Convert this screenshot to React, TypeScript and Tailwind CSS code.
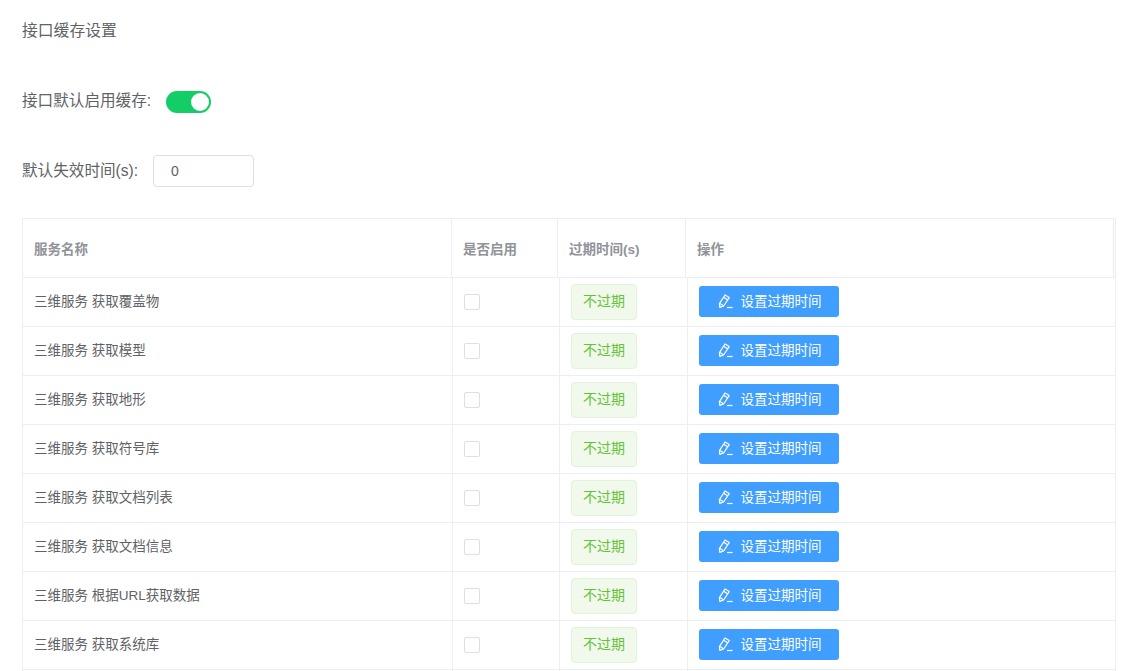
import type { ReactNode } from "react";

const services = [
  "三维服务 获取覆盖物",
  "三维服务 获取模型",
  "三维服务 获取地形",
  "三维服务 获取符号库",
  "三维服务 获取文档列表",
  "三维服务 获取文档信息",
  "三维服务 根据URL获取数据",
  "三维服务 获取系统库",
];

function PenIcon() {
  return (
    <svg width="16" height="16" viewBox="0 0 16 16" fill="none" stroke="currentColor" strokeWidth="1.2">
      <path d="M1.8 14.4 L1.4 10.6 L7 2 L11.2 4.6 L5.6 13 Z" strokeLinejoin="round" />
      <path d="M2 10.6 L5.4 12.8" />
      <path d="M5.6 4.2 L9.6 6.8" />
      <path d="M9 14.5 H14.6" />
    </svg>
  );
}

function Row({ name, check, tag, action }: { name?: string; check?: ReactNode; tag?: ReactNode; action?: ReactNode }) {
  return (
    <div className="flex h-[49px] border-b border-r border-[#ebeef5] text-[13.5px]">
      <div className="flex w-[430px] items-center border-r border-[#ebeef5] pl-[11px]">{name}</div>
      <div className="flex w-[107px] items-center border-r border-[#ebeef5] pb-[1px] pl-[11px]">{check}</div>
      <div className="flex w-[128px] items-center border-r border-[#ebeef5] pl-[11px]">{tag}</div>
      <div className="flex items-center pb-[2px] pl-[11px]">{action}</div>
    </div>
  );
}

export default function App() {
  return (
    <div className="h-[671px] overflow-hidden bg-white pl-[22px] pr-[19px] text-[#606266] font-['Liberation_Sans','Noto_Sans_CJK_SC',sans-serif]">
      <p className="pt-[20px] text-[15.8px] leading-[22px]">接口缓存设置</p>

      <div className="mt-[47px] flex h-[24px] items-center">
        <span className="w-[130px] text-[15.6px]">接口默认启用缓存:</span>
        <span className="ml-[14px] flex h-[22px] w-[45px] items-center justify-end self-end rounded-full bg-[#13ce66] pr-[2px]">
          <span className="h-[18px] w-[18px] rounded-full bg-white" />
        </span>
      </div>

      <div className="mt-[42px] flex items-center">
        <span className="w-[117px] text-[15.6px]">默认失效时间(s):</span>
        <div className="ml-[14px] flex h-[32px] w-[101px] items-center rounded-[4px] border border-[#dcdfe6] pl-[17px] text-[14px]">
          0
        </div>
      </div>

      <div className="mt-[31px] border-t border-l border-[#ebeef5]">
        <div className="flex h-[59px] border-b border-[#ebeef5] text-[13.5px] font-bold text-[#909399]">
          <div className="flex w-[429px] items-center border-r border-[#ebeef5] pt-[4px] pl-[11px]">服务名称</div>
          <div className="flex w-[106px] items-center border-r border-[#ebeef5] pt-[4px] pl-[11px]">是否启用</div>
          <div className="flex w-[128px] items-center border-r border-[#ebeef5] pt-[4px] pl-[11px]">过期时间(s)</div>
          <div className="flex w-[428px] items-center border-r border-[#ebeef5] pt-[4px] pl-[11px]">操作</div>
          <div className="ml-[1px] w-[1px] bg-[#ebeef5]" />
        </div>
        {services.map((name, index) => (
          <Row
            key={index}
            name={name}
            check={<span className="h-[16px] w-[16px] rounded-[2px] border border-[#dcdfe6] bg-white" />}
            tag={
              <span className="flex h-[36px] w-[66px] items-center justify-center rounded-[4px] border border-[#e1f3d8] bg-[#f0f9eb] pb-[1px] text-[14px] text-[#67c23a]">
                不过期
              </span>
            }
            action={
              <button className="flex h-[31px] w-[140px] items-center justify-center gap-[7px] rounded-[3px] bg-[#409eff] pl-[1px] text-[13.5px] text-white">
                <PenIcon />
                <span className="pt-[3px]">设置过期时间</span>
              </button>
            }
          />
        ))}
        <Row />
      </div>
    </div>
  );
}
